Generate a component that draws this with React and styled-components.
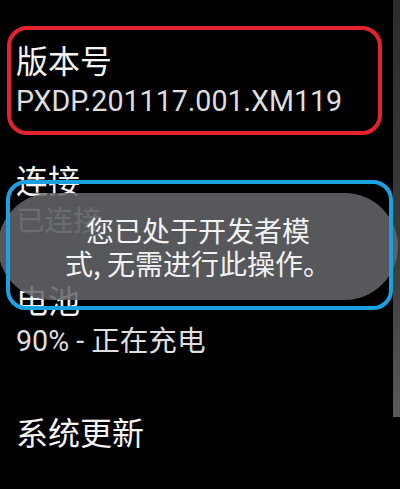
import React from "react";
import styled, { createGlobalStyle } from "styled-components";

const Global = createGlobalStyle`
  html, body { margin: 0; padding: 0; background: #000; }
  body { width: 400px; height: 489px; overflow: hidden; }
`;

const Screen = styled.div`
  position: relative;
  width: 400px;
  height: 489px;
  background: #000;
  display: flex;
  flex-direction: row;
  overflow: hidden;
  font-family: Roboto, "Noto Sans CJK SC", sans-serif;
`;

const List = styled.div`
  flex: 1;
  display: flex;
  flex-direction: column;
  padding-top: 19px;
`;

const Item = styled.div`
  display: flex;
  flex-direction: column;
  padding: ${(p) => (p.$spaced ? "30px" : "18px")} 0 18px 16px;
`;

const Title = styled.div`
  font-family: "Noto Sans CJK SC", sans-serif;
  font-size: 32px;
  line-height: 44px;
  color: #f4f4f4;
`;

const Sub = styled.div`
  font-family: Roboto, "Noto Sans CJK SC", sans-serif;
  font-size: 28.6px;
  line-height: 40px;
  color: ${(p) => (p.$dim ? "#a0a0a0" : "#dedede")};
`;

const Scrollbar = styled.div`
  width: 7px;
  height: 417px;
  flex-shrink: 0;
  background: linear-gradient(to bottom, #2c2c2c, #3a3a3a 60%, #5a5a5a);
`;

const Toast = styled.div`
  position: absolute;
  left: -2px;
  top: 193px;
  width: 400px;
  height: 107px;
  border-radius: 54px;
  background: rgba(100, 101, 105, 0.87);
  display: flex;
  align-items: center;
  justify-content: center;
  text-align: center;
  font-family: "Noto Sans CJK SC", sans-serif;
  font-size: 28px;
  line-height: 33px;
  color: #f2f2f2;
  white-space: nowrap;
`;

const Mark = styled.div`
  position: absolute;
  box-sizing: border-box;
  left: ${(p) => p.$x}px;
  top: ${(p) => p.$y}px;
  width: ${(p) => p.$w}px;
  height: ${(p) => p.$h}px;
  border: 4px solid ${(p) => p.$color};
  border-radius: 20px;
`;

export default function App() {
  return (
    <>
      <Global />
      <Screen>
        <List>
          <Item>
            <Title>版本号</Title>
            <Sub>PXDP.201117.001.XM119</Sub>
          </Item>
          <Item>
            <Title>连接</Title>
            <Sub $dim>已连接</Sub>
          </Item>
          <Item>
            <Title>电池</Title>
            <Sub>90% - 正在充电</Sub>
          </Item>
          <Item $spaced>
            <Title>系统更新</Title>
          </Item>
        </List>
        <Scrollbar />
        <Toast>
          <div>
            您已处于开发者模
            <br />
            式, 无需进行此操作。
          </div>
        </Toast>
        <Mark $x={7} $y={26} $w={375} $h={109} $color="#e3212f" />
        <Mark $x={6} $y={180} $w={387} $h={130} $color="#1ba1e2" />
      </Screen>
    </>
  );
}
